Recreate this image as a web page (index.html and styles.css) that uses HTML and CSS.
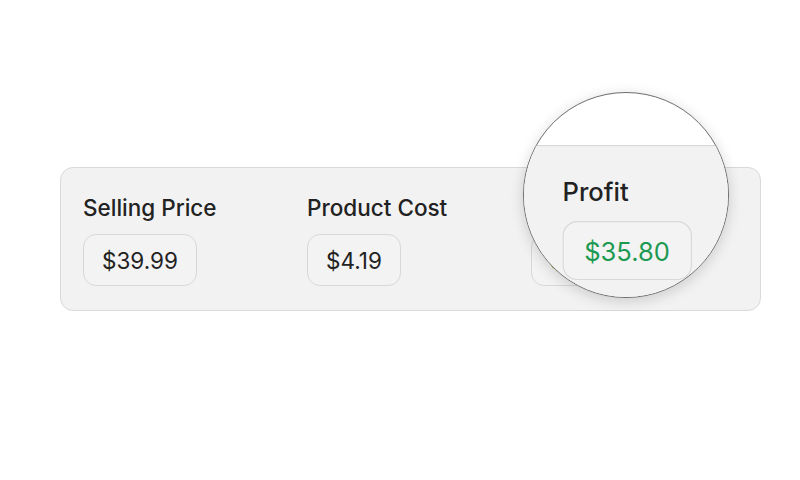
FILE: index.html
```html
<!DOCTYPE html>
<html>
<head>
<meta charset="utf-8">
<link rel="stylesheet" href="styles.css">
</head>
<body>
<div class="stage">
  <div class="card">
    <div class="field">
      <div class="label">Selling Price</div>
      <div class="pill">$39.99</div>
    </div>
    <div class="field">
      <div class="label">Product Cost</div>
      <div class="pill">$4.19</div>
    </div>
    <div class="field">
      <div class="label">Profit</div>
      <div class="pill profit">$35.80</div>
    </div>
  </div>
  <div class="lens" aria-hidden="true">
    <div class="lens-view">
      <div class="card">
        <div class="field"></div>
        <div class="field"></div>
        <div class="field">
          <div class="label">Profit</div>
          <div class="pill profit">$35.80</div>
        </div>
      </div>
    </div>
  </div>
</div>
</body>
</html>
```
FILE: styles.css
```css
html, body {
  margin: 0;
  padding: 0;
  background: #ffffff;
}
body {
  font-family: Inter, "Liberation Sans", sans-serif;
  color: #1f1f1f;
}
.stage {
  position: relative;
  width: 800px;
  height: 480px;
  padding: 167px 0 0 60px;
  box-sizing: border-box;
}
.card {
  width: 701px;
  height: 144px;
  box-sizing: border-box;
  background: #f2f2f2;
  border: 1px solid #d9d9d9;
  border-radius: 13px;
  padding: 27px 0 0 22px;
  display: grid;
  grid-template-columns: 224px 224px 224px;
}
.field {
  display: flex;
  flex-direction: column;
  align-items: flex-start;
  gap: 13px;
}
.label {
  font-size: 22.5px;
  line-height: 26px;
  font-weight: 500;
  color: #222;
}
.pill {
  height: 52px;
  box-sizing: border-box;
  border: 1px solid #d8d8d8;
  border-radius: 13px;
  padding: 0 18px;
  display: flex;
  align-items: center;
  font-size: 22.5px;
  color: #222;
  background: #f3f3f3;
}
.pill.profit {
  color: #1d9a52;
}
.lens {
  position: absolute;
  left: 523px;
  top: 92px;
  width: 206px;
  height: 206px;
  box-sizing: border-box;
  border-radius: 50%;
  border: 1px solid #6e6e6e;
  box-shadow: 0 3px 14px rgba(0,0,0,0.16);
  overflow: hidden;
  background: #ffffff;
}
.lens-view {
  position: absolute;
  left: -496px;
  top: 52px;
  transform: scale(1.135);
  transform-origin: 0 0;
}
```
